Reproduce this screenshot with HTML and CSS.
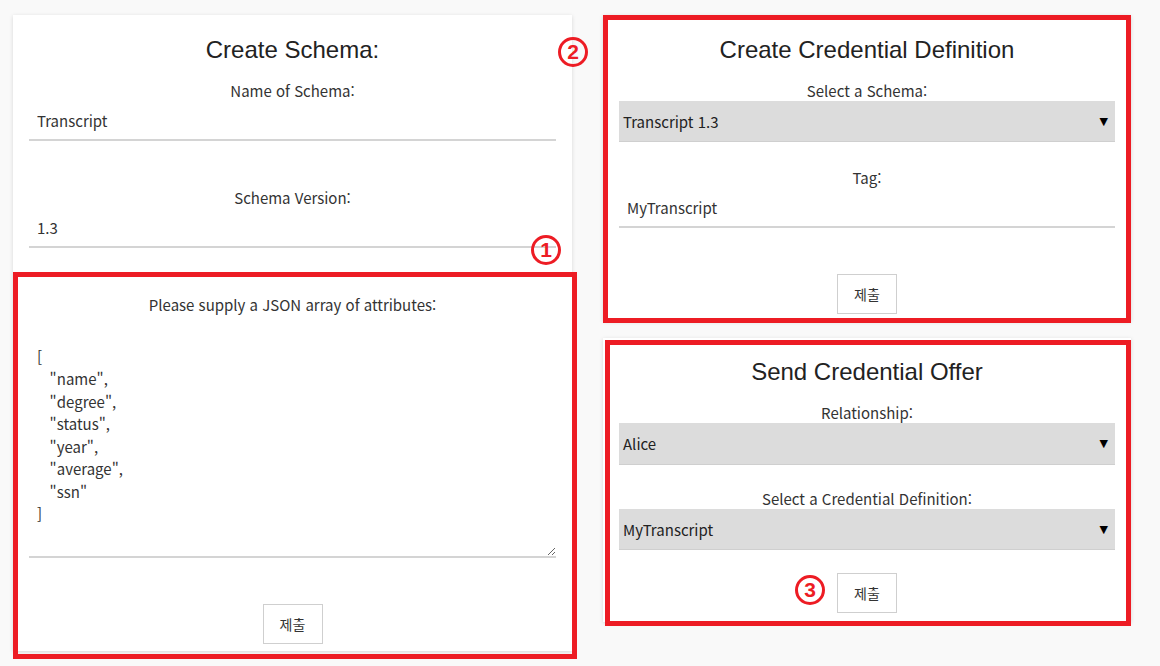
FILE: index.html
```html
<!DOCTYPE html>
<html lang="ko">
<head>
<meta charset="utf-8">
<title>Credentials</title>
<link rel="stylesheet" href="styles.css">
</head>
<body>
<div class="page">
  <div class="col col-left">
    <section class="card">
      <h2 class="card-title">Create Schema:</h2>
      <div class="field field-first">
        <label class="field-label">Name of Schema:</label>
        <input class="text-input" type="text" value="Transcript">
      </div>
      <div class="field field-spaced">
        <label class="field-label">Schema Version:</label>
        <input class="text-input" type="text" value="1.3">
      </div>
      <div class="field field-spaced">
        <label class="field-label">Please supply a JSON array of attributes:</label>
        <textarea class="json-input">

[
   "name",
   "degree",
   "status",
   "year",
   "average",
   "ssn"
]</textarea>
      </div>
      <div class="actions">
        <button class="submit-btn" type="button">제출</button>
      </div>
      <div class="mark-box mark-attrs"></div>
    </section>
  </div>
  <div class="col col-right">
    <section class="card card-creddef">
      <h2 class="card-title">Create Credential Definition</h2>
      <div class="field field-first">
        <label class="field-label">Select a Schema:</label>
        <div class="select-box"><span>Transcript 1.3</span><span class="select-arrow">▼</span></div>
      </div>
      <div class="field">
        <label class="field-label">Tag:</label>
        <input class="text-input" type="text" value="MyTranscript">
      </div>
      <div class="actions">
        <button class="submit-btn" type="button">제출</button>
      </div>
      <div class="mark-box mark-creddef"></div>
    </section>
    <section class="card card-offer">
      <h2 class="card-title">Send Credential Offer</h2>
      <div class="field field-first">
        <label class="field-label">Relationship:</label>
        <div class="select-box select-tall"><span>Alice</span><span class="select-arrow">▼</span></div>
      </div>
      <div class="field field-tight">
        <label class="field-label">Select a Credential Definition:</label>
        <div class="select-box"><span>MyTranscript</span><span class="select-arrow">▼</span></div>
      </div>
      <div class="actions actions-tight">
        <button class="submit-btn" type="button">제출</button>
      </div>
      <div class="mark-box mark-offer"></div>
    </section>
  </div>
  <span class="step step-1">1</span>
  <span class="step step-2">2</span>
  <span class="step step-3">3</span>
</div>
</body>
</html>
```
FILE: styles.css
```css
* { box-sizing: border-box; }
html, body { margin: 0; padding: 0; }
body {
  background: #f9f9f9;
  font-family: "Noto Sans CJK KR", "Noto Sans", sans-serif;
  font-size: 15px;
  color: #333;
}
.page {
  position: relative;
  display: flex;
  align-items: flex-start;
  gap: 31px;
  padding: 15px 0 0 13px;
  width: 1160px;
  height: 666px;
}
.col { display: flex; flex-direction: column; }
.col-left { width: 559px; }
.col-right { width: 528px; gap: 17px; }
.card {
  position: relative;
  background: #fff;
  box-shadow: 0 1px 4px rgba(0,0,0,0.14);
  padding: 21px 16px 7px;
}
.card-offer { padding-top: 20px; padding-bottom: 9px; }
.card-title {
  margin: 0;
  font-family: "Liberation Sans", Arial, sans-serif;
  font-weight: normal;
  font-size: 24px;
  line-height: 28px;
  text-align: center;
  color: #222;
}
.field { display: flex; flex-direction: column; margin-top: 26px; }
.field-first { margin-top: 17px; }
.field-spaced { margin-top: 47px; }
.field-tight { margin-top: 24px; }
.field-label {
  display: block;
  text-align: center;
  line-height: 20px;
  font-size: 15px;
  color: #333;
}
.text-input {
  display: block;
  width: 100%;
  height: 40px;
  border: none;
  border-bottom: 2px solid #d4d4d4;
  padding: 0 8px;
  margin: 0;
  font-family: inherit;
  font-size: 15px;
  color: #333;
  background: #fff;
  outline: none;
}
.json-input {
  display: block;
  width: 100%;
  height: 243px;
  border: none;
  border-bottom: 2px solid #d4d4d4;
  padding: 8px;
  margin: 0;
  font-family: inherit;
  font-size: 15px;
  line-height: 22.5px;
  color: #333;
  background: #fff;
  outline: none;
  resize: vertical;
}
.select-box {
  display: flex;
  align-items: center;
  justify-content: space-between;
  height: 41px;
  padding: 0 7px 0 4px;
  background: #dcdcdc;
  border-bottom: 1px solid #cfcfcf;
  font-size: 15px;
  color: #222;
}
.select-tall { height: 42px; }
.select-arrow { font-family: "DejaVu Sans", sans-serif; font-size: 11px; color: #000; }
.actions { display: flex; justify-content: center; margin-top: 46px; }
.actions-tight { margin-top: 23px; }
.submit-btn {
  width: 60px;
  height: 40px;
  background: #fff;
  border: 1px solid #cfcfcf;
  font-family: "Noto Sans CJK KR", sans-serif;
  font-size: 14px;
  color: #333;
  padding: 0;
}
.mark-box {
  position: absolute;
  border: 5px solid #ed1c24;
  pointer-events: none;
}
.mark-attrs { top: 257px; left: 0; right: -5px; bottom: -8px; }
.mark-creddef { top: 0; left: 0; right: 0; bottom: -2px; }
.mark-offer { top: 2px; left: 2px; right: 0; bottom: -4px; }
.step {
  position: absolute;
  width: 30px;
  height: 30px;
  border: 3px solid #ed1c24;
  border-radius: 50%;
  color: #ed1c24;
  font-family: "Liberation Sans", Arial, sans-serif;
  font-weight: bold;
  font-size: 21px;
  line-height: 24px;
  text-align: center;
}
.step-1 { left: 531px; top: 235px; }
.step-2 { left: 558px; top: 37px; }
.step-3 { left: 795px; top: 575px; }
```
